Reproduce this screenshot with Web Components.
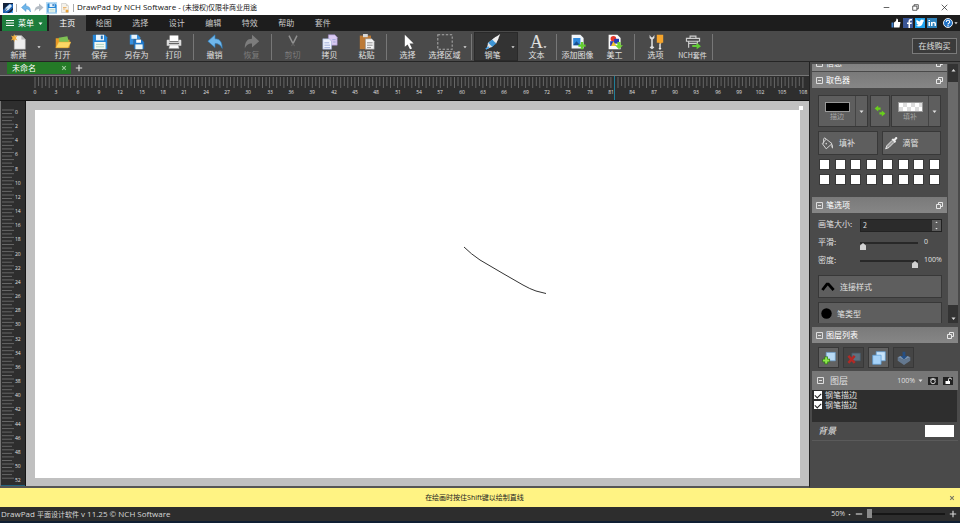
<!DOCTYPE html>
<html lang="zh-CN">
<head>
<meta charset="utf-8">
<title>DrawPad by NCH Software</title>
<style>
html,body{height:100%}
body{margin:0;font:8px/12px "Open Sans","Noto Sans CJK SC",sans-serif;color:#e0e0e0;background:#4a4a4a;--cjk:"Noto Sans CJK SC","Open Sans",sans-serif}
</style>
</head>
<body>
<draw-app></draw-app>
<script>
const ICONS = {
  app:['0 0 20 20','<rect width="20" height="20" fill="#14233c"/><path d="M0 14L12 2h8v8L8 20H0z" fill="#1d62b4"/><path d="M3 17L6 9 14 2l4 4-7 8z" fill="#d9ecfa"/><path d="M3 17l5-6" stroke="#14233c" stroke-width="1.5"/><path d="M12 20q6-1 8-7v7z" fill="#4aa3ec"/>'],
  undo:['0 0 20 20','<path d="M1 9L10 1v5c6 0 9 4 9 12-2-4-4-6-9-6v5z" fill="#6fb6ea" stroke="#2f7fbf" stroke-width=".8"/>'],
  redo:['0 0 20 20','<path d="M19 9L10 1v5C4 6 1 10 1 18c2-4 4-6 9-6v5z" fill="#b4bcc4"/>'],
  redoOff:['0 0 20 20','<path d="M19 9L10 1v5C4 6 1 10 1 18c2-4 4-6 9-6v5z" fill="#7c7c7c"/>'],
  save:['0 0 20 20','<path d="M1 2q0-1 1-1h14l3 3v14q0 1-1 1H2q-1 0-1-1z" fill="#2687d8"/><path d="M5 1h10v7H5z" fill="#eaf5fd"/><path d="M11 2h2.500v4.500H11z" fill="#2472b8"/><path d="M3 10h14v9H3z" fill="#f1f8f2"/><path d="M5 13h10M5 16h10" stroke="#9bcab8"/>'],
  saveAs:['0 0 20 20','<path d="M1 1h10l3 3v9H1z" fill="#3590df"/><path d="M3 1h7v5H3z" fill="#e6f3fc"/><path d="M6 7h10l3 3v9H6z" fill="#1d78cc" stroke="#4a4a4a" stroke-width=".6"/><path d="M9 7h6v4H9z" fill="#fff"/><path d="M8 13h9v6H8z" fill="#eef7f6"/>'],
  doc:['0 0 20 20','<path d="M3 1h9l5 5v13H3z" fill="#f5f2ea" stroke="#aaa" stroke-width=".8"/><path d="M12 1v5h5" fill="#d6d2c8"/><path d="M6 9h7M6 12h5" stroke="#e5a34b" stroke-width="1.500"/><circle cx="14" cy="16" r="3" fill="#eba338"/>'],
  newDoc:['0 0 20 20','<path d="M4 2h9l5 5v12H4z" fill="#ededed" stroke="#999" stroke-width=".6"/><path d="M13 2v5h5z" fill="#bcbcbc"/><path d="M4 0l1 3 3-1-2 3 2 3-3-1-1 3-1-3-3 1 2-3-2-3 3 1z" fill="#f6b13c"/>'],
  open:['0 0 22 20','<path d="M1 5h6l2 2h11v11H1z" fill="#e99a24"/><path d="M5 4l12-2 2 8H6z" fill="#7fc254"/><path d="M1 18L5 10h17l-4 8z" fill="#fbd765" stroke="#e6a52b" stroke-width=".6"/>'],
  print:['0 0 22 20','<path d="M5 1h12v8H5z" fill="#fff"/><path d="M1 8q0-1 1-1h3v3h12V7h3q1 0 1 1v7H1z" fill="#dcdcdc"/><path d="M4 12h14" stroke="#666" stroke-width="1.500"/><path d="M5 14h12l1 5H4z" fill="#fafafa" stroke="#999" stroke-width=".7"/>'],
  cut:['0 0 20 20','<path d="M5 2l5 10 5-10" stroke="#929292" stroke-width="1.800" fill="none"/><path d="M10 12l-2 3M10 12l2 3" stroke="#606060" stroke-width="1.500"/>'],
  copy:['0 0 20 20','<path d="M8 1h8l3 3v10H8z" fill="#d9c9f2" stroke="#9a86c4" stroke-width=".7"/><path d="M1 6h8l3 3v10H1z" fill="#eef1fd" stroke="#93a2d0" stroke-width=".7"/><path d="M3 11h6M3 14h7M3 17h7M13 7h4M14 10h3" stroke="#8f9fd2"/>'],
  paste:['0 0 20 20','<path d="M1 2h14v17H1z" fill="#bd7a35"/><path d="M5 0h6v4H5z" fill="#d7d7d7"/><path d="M8 6h8l3 3v10H8z" fill="#f4f4f4" stroke="#888" stroke-width=".7"/><path d="M10 11h7M10 14h7M10 17h5" stroke="#777"/>'],
  cursor:['0 0 20 20','<path d="M6 1v15l3.500-3 3 6 2.500-1-3-6h5z" fill="#fff"/>'],
  select:['0 0 20 20','<path d="M1 1h18v18H1z" fill="none" stroke="#aaa" stroke-width="1.300" stroke-dasharray="3 2"/>'],
  pen:['0 0 20 20','<path d="M19 0L9 7l5 5z" fill="#f3f3f3"/><path d="M14 3L4 11v5h5l8-10z" fill="#eee"/><path d="M9 7l5 5-6 5-5-5z" fill="#3e95d5"/><path d="M4 11l5 5-7 3z" fill="#e5e5e5"/><path d="M1 19l4-3" stroke="#46a6ef" stroke-width="2"/>'],
  image:['0 0 20 20','<path d="M2 1h11l4 4v13H2z" fill="#f2f6fa"/><path d="M4 5h9v9H4z" fill="#2e8ade"/><path d="M4 14l4-5 5 5z" fill="#174f8f"/><path d="M15 10v9M10.500 14.500h9" stroke="#63cf2d" stroke-width="3"/>'],
  clip:['0 0 20 20','<path d="M2 1h11l4 4v14H2z" fill="#fafafa"/><circle cx="8" cy="6" r="3.500" fill="#e5362b"/><path d="M9 6h6v6H9z" fill="#263bb4"/><path d="M4 9h6v6H4z" fill="#2636b4"/><path d="M8 9l4 6H5z" fill="#f1c332"/><path d="M13 10h4v4h3l-5 5-5-5h3z" fill="#70d334"/>'],
  options:['0 0 20 20','<path d="M2 1v4l2 2v8l-2 2 3 2 3-2-2-2V7l2-2V1L6 4H4z" fill="#ddd"/><path d="M11 1h8v10h-2l-1 2-2-2h-3z" fill="#f5a42b"/><path d="M15 12v5" stroke="#ddd" stroke-width="2"/><circle cx="15" cy="18" r="1.500" fill="#eee"/>'],
  suite:['0 0 22 20','<path d="M7 5V2h8v3M2 5h18v4H2zM5 9v9M17 9v6M5 12h12" fill="none" stroke="#cdcdcd" stroke-width="1.600"/><path d="M10 14h6v-3l6 5-6 4v-3h-6z" fill="#62cc35"/>'],
  like:['0 0 20 20','<path d="M1 9h4v10H1z" fill="#4283ce"/><path d="M6 9l4-3 1-5q3 0 3 3v4h5l-2 11H6z" fill="#fff"/>'],
  fb:['0 0 20 20','<rect width="20" height="20" fill="#3a5696"/><path d="M11 20v-8H8V9h3V6q0-4 4-4h3v3h-2q-2 0-2 2v2h4l-1 3h-3v8z" fill="#fff"/>'],
  tw:['0 0 20 20','<rect width="20" height="20" fill="#20a2ed"/><path d="M2 15q4 0 5-2-3 0-4-3h2Q2 9 2 6l2 1Q2 5 3 3q3 4 7 4 0-4 4-4l2 1 2-1-1 3h1l-2 2q-1 8-8 9-4 0-6-2z" fill="#fff"/>'],
  li:['0 0 20 20','<rect width="20" height="20" fill="#2f83bc"/><path d="M3 8h3v8H3zM3 4h3v2H3zM8 8h3v1q1-1.500 3-1.500 4 0 4 4V16h-3v-4q0-2-2-2t-2 2v4H8z" fill="#fff"/>'],
  help:['0 0 20 20','<circle cx="10" cy="10" r="9" fill="#1c6fc4" stroke="#fff" stroke-width="1.800"/><path d="M6.500 8q0-3.500 3.500-3.500T13.500 8q0 1.500-2 2.500-1.500 1-1.500 2.500" fill="none" stroke="#fff" stroke-width="2.200"/><circle cx="10" cy="15.500" r="1.400" fill="#fff"/>'],
  min:['0 0 10 10','<path d="M1 5h8" stroke="#222"/>'],
  restore:['0 0 10 10','<path d="M1 3h6v6H1zM3 3V1h6v6H7" fill="none" stroke="#222"/>'],
  close:['0 0 10 10','<path d="M1 1l8 8M9 1L1 9" stroke="#222"/>'],
  x:['0 0 10 10','<path d="M2 2l6 6M8 2L2 8" stroke="currentColor" stroke-width="1.800"/>'],
  burger:['0 0 10 10','<path d="M0 2h10M0 5h10M0 8h10" stroke="#fff" stroke-width="1.300"/>'],
  caret:['0 0 10 10','<path d="M1 3h8L5 8z" fill="currentColor"/>'],
  up:['0 0 10 10','<path d="M1 7l4-5 4 5z" fill="currentColor"/>'],
  plus:['0 0 10 10','<path d="M5 1v8M1 5h8" stroke="currentColor" stroke-width="1.400"/>'],
  minus:['0 0 10 10','<path d="M1 5h8" stroke="currentColor" stroke-width="1.400"/>'],
  minusBox:['0 0 7 7','<path d="M.5.5h6v6h-6zM2 3.500h3" fill="none" stroke="#ddd"/>'],
  popout:['0 0 7 7','<path d="M.5 2.500h4v4h-4zM2.500 2.500v-2h4v4h-2" fill="none" stroke="#e8e8e8"/>'],
  swap:['0 0 20 20','<path d="M1 6l6-5v3h4v4H7v3z" fill="#69cf1c"/><path d="M19 14l-6 5v-3H9v-4h4V9z" fill="#69cf1c"/>'],
  bucket:['0 0 20 20','<path d="M8 4l9 7-9 8-6-8zM8 4q-3-4-4 0v7" fill="none" stroke="#d5d5d5" stroke-width="1.500"/><path d="M15 10q5 3 3 9-3-2-2-6" fill="#d5d5d5"/><circle cx="8" cy="11" r="1.200" fill="#d5d5d5"/>'],
  dropper:['0 0 20 20','<path d="M12 3l2 1 2-3q3-1 3 2l-3 3 1 2-2 2-5-5z" fill="#eee"/><path d="M11 6L3 14l-2 5 5-2 8-8" fill="#9d9d9d" stroke="#eee" stroke-width="1.400"/>'],
  join:['0 0 20 14','<path d="M2 12L8.500 3.500h2L18 12" fill="none" stroke="#000" stroke-width="4"/>'],
  dot:['0 0 20 20','<circle cx="10" cy="10" r="9.500" fill="#000"/>'],
  addLayer:['0 0 20 20','<path d="M6 2h13v12H6z" fill="#b9daf5" stroke="#6b9dcc"/><path d="M6 8v11M.500 13.500h11" stroke="#2f7d16" stroke-width="5"/><path d="M6 9v9M1.500 13.500h9" stroke="#8fe84b" stroke-width="3"/>'],
  delLayer:['0 0 20 20','<path d="M7 3h12v11H7z" fill="#5d7181" stroke="#485a69"/><path d="M2 7l9 10M11 7L2 17" stroke="#b12a26" stroke-width="3.500"/>'],
  dupLayer:['0 0 20 20','<path d="M6 1h13v13H6z" fill="#c8e3fa" stroke="#5d9cd4"/><path d="M1 6h12v13H1z" fill="#a6d2f8" stroke="#5d9cd4"/>'],
  mergeLayer:['0 0 20 20','<path d="M1 9l9 4 9-4v5l-9 6-9-6z" fill="#64788f"/><path d="M1 9l9 4 9-4-4-2H5z" fill="#7b93af"/><path d="M8 1h4v6h3l-5 5-5-5h3z" fill="#264f83"/>'],
  eye:['0 0 20 16','<rect width="20" height="16" fill="#222"/><circle cx="10" cy="9" r="4.500" fill="none" stroke="#e8e8e8" stroke-width="1.800"/><path d="M4 5q6-5 12 0" stroke="#e8e8e8" fill="none" stroke-width="1.500"/>'],
  lock:['0 0 20 16','<rect width="20" height="16" fill="#222"/><path d="M5 8h9v6H5z" fill="#fff"/><path d="M11 8V5q0-3 3-3t3 3" fill="none" stroke="#fff" stroke-width="1.800"/>']
};

const BASE = `<style>*{box-sizing:border-box}button,input,select{font:inherit;color:inherit}button{margin:0;padding:0;border:0;background:none;display:flex;align-items:center;justify-content:center}
input{margin:0;accent-color:#fff}</style>`;

/* Registers an element whose shadow root is cloned from the given markup. */
function define(name, markup, setup){
  const t = document.createElement('template');
  t.innerHTML = BASE + markup;
  customElements.define(name, class extends HTMLElement{
    connectedCallback(){
      if(this.shadowRoot) return;
      const r = this.attachShadow({mode:'open'});
      r.append(t.content.cloneNode(true));
      setup?.(r, this);
    }
  });
}

define('ui-icon','<style>:host{display:block;flex:none;width:10px;height:10px}svg{display:block;width:100%;height:100%}</style><svg></svg>',(r,h)=>{
  const [box,body]=ICONS[h.getAttribute('name')], s=r.querySelector('svg');
  s.setAttribute('viewBox',box); s.setAttribute('aria-hidden','true'); s.innerHTML=body;
});

define('title-bar',`<style>
:host{display:flex;align-items:center;height:15px;background:#fff;color:#111;padding-left:3px}
.quick{display:flex;gap:2px;align-items:center}
.quick button{width:11px;height:12px}
.quick .on{background:#b9dcf3}
.quick ui-icon{width:10px}
i{width:1px;height:8px;background:#aaa;margin:0 1px}
h1{font:inherit;margin:0 0 0 2px;flex:1;white-space:nowrap}
h1 span{font-size:7px}
.win button{width:29px;height:15px}.win{display:flex;padding-right:1px}.win ui-icon{width:7px;height:7px}
</style>
<div class="quick"><ui-icon name="app"></ui-icon><i></i><button aria-label="撤销"><ui-icon name="undo"></ui-icon></button><button aria-label="恢复"><ui-icon name="redo"></ui-icon></button><button class="on" aria-label="保存"><ui-icon name="save"></ui-icon></button><button aria-label="文档"><ui-icon name="doc"></ui-icon></button><i></i></div>
<h1>DrawPad by NCH Software - <span>(未授权)仅限非商业用途</span></h1>
<div class="win"><button aria-label="最小化"><ui-icon name="min"></ui-icon></button><button aria-label="还原"><ui-icon name="restore"></ui-icon></button><button aria-label="关闭"><ui-icon name="close"></ui-icon></button></div>`);

define('menu-bar',`<style>
:host{display:flex;align-items:stretch;height:16px;background:#1d1d1d;font-family:var(--cjk);padding:0 2px}
.menu{width:45px;background:#1d7c3c;gap:4px;color:#fff}.menu ui-icon{width:8px;height:8px}.menu ui-icon:last-child{width:5px;height:5px}
nav{display:grid;grid-template-columns:repeat(8,1fr);width:292px;margin-left:2px}
nav button{color:#c9c9c9}nav .on{background:#4a4a4a;color:#fff;box-shadow:inset 0 1px #686868}
.links{margin-left:auto;display:flex;align-items:center;gap:2px}.links a{display:block;color:#fff}.links a:last-of-type{margin-left:4px}.links .c{width:4px;height:4px;margin-left:-1px}
</style>
<button class="menu"><ui-icon name="burger"></ui-icon>菜单<ui-icon name="caret"></ui-icon></button>
<nav><button class="on">主页</button><button>绘图</button><button>选择</button><button>设计</button><button>编辑</button><button>特效</button><button>帮助</button><button>套件</button></nav>
<div class="links"><a href="#" aria-label="Like"><ui-icon name="like"></ui-icon></a><a href="#" aria-label="Facebook"><ui-icon name="fb"></ui-icon></a><a href="#" aria-label="Twitter"><ui-icon name="tw"></ui-icon></a><a href="#" aria-label="LinkedIn"><ui-icon name="li"></ui-icon></a><a href="#" aria-label="Help"><ui-icon name="help"></ui-icon></a><ui-icon class="c" name="caret"></ui-icon></div>`);

define('tool-button',`<style>
:host{display:flex;width:37px;position:relative}
:host([split]){width:44px}:host([split]) button{padding-right:7px}
:host([active]) button{background:#333;border:1px solid #2a2a2a}
:host([off]){color:#7d7d7d}
:host([small]) button{font-size:7px}
button{flex:1;flex-direction:column;white-space:nowrap;border:1px solid transparent;line-height:10px}
ui-icon{width:16px;height:16px}
b{font:18px/16px "Liberation Serif",serif;height:16px}
.c{position:absolute;right:3px;top:13px;width:4px;height:4px}
:host([menu]) .c{right:8px}
</style><button><slot></slot></button>`,(r,h)=>{
  const b=r.querySelector('button'), n=h.getAttribute('icon');
  b.insertAdjacentHTML('afterbegin', n==='A'?'<b>A</b>':`<ui-icon name="${n}"></ui-icon>`);
  if(h.hasAttribute('split')||h.hasAttribute('menu')) b.insertAdjacentHTML('beforeend','<ui-icon class="c" name="caret"></ui-icon>');
});

define('tool-bar',`<style>
:host{display:flex;height:31px;background:#4a4a4a;border-bottom:1px solid #252525;font-family:var(--cjk);color:#e0e0e0;padding:1px 0 0}
i{width:1px;height:26px;background:#777;margin:2px 2px 0 1px}
.buy{margin:6px 3px 7px auto;width:45px;border:1px solid #7a7a7a;background:#3b3b3b}
</style>
<tool-button icon="newDoc" split>新建</tool-button><tool-button icon="open">打开</tool-button><tool-button icon="save">保存</tool-button><tool-button icon="saveAs">另存为</tool-button><tool-button icon="print">打印</tool-button><i></i>
<tool-button icon="undo">撤销</tool-button><tool-button icon="redoOff" off>恢复</tool-button><i></i>
<tool-button icon="cut" off>剪切</tool-button><tool-button icon="copy">拷贝</tool-button><tool-button icon="paste">粘贴</tool-button><i></i>
<tool-button icon="cursor">选择</tool-button><tool-button icon="select" split>选择区域</tool-button><i></i>
<tool-button icon="pen" split active>钢笔</tool-button><tool-button icon="A" menu>文本</tool-button><i></i>
<tool-button icon="image">添加图像</tool-button><tool-button icon="clip">美工</tool-button><i></i>
<tool-button icon="options">选项</tool-button><tool-button icon="suite" small>NCH套件</tool-button><i></i>
<button class="buy">在线购买</button>`);

define('doc-tabs',`<style>
:host{display:flex;align-items:flex-start;height:14px;background:#4a4a4a;border-bottom:1px solid #777;padding-left:7px;font-family:var(--cjk);gap:4px}
.tab{display:flex;align-items:center;justify-content:space-between;width:64px;height:12px;background:#247a27;padding:0 4px 0 5px;color:#fff}
.tab button{color:#9ccc9c}.tab ui-icon{width:6px;height:6px}.add{height:12px}.add ui-icon{width:8px;height:8px}
</style>
<div class="tab"><span>未命名</span><button aria-label="关闭"><ui-icon name="x"></ui-icon></button></div><button class="add" aria-label="添加"><ui-icon name="plus"></ui-icon></button>`);

/* Ruler scale: labels every two or three units, with a tick every half unit. */
define('scale-ruler',`<style>:host{display:block;overflow:hidden;background:#2e2e2e;min-width:0;min-height:0;position:relative}svg{position:absolute;width:100%;height:100%}text{font:5px "Open Sans",sans-serif;fill:#e0e0e0}</style><svg></svg>`,(r,h)=>{
  const v=h.hasAttribute('vertical'), u=v?7.08:7.11, start=v?9:35, n=v?105:217, step=v?2:3, last=v?52:108;
  let s='';
  for(let i=0;i<n;i++){
    const p=(start+i*u/2).toFixed(1), l=i%2?10:12;
    s+= v?`<path d="M1 ${p}H${l+1}" stroke="#666"/>`:`<path d="M${p} 1V${l}" stroke="#666"/>`;
  }
  for(let i=0;i<=last;i+=step){
    const p=Math.round(start+i*u);
    s+= v?`<text x="14" y="${p+4}">${i}</text>`:`<text x="${p}" y="18" text-anchor="middle">${i}</text>`;
  }
  s+= v?'<path d="M0 384.500H25" stroke="#22637d"/>':'<path d="M614.500 0V24" stroke="#217f99"/>';
  r.querySelector('svg').innerHTML=s;
});

define('draw-canvas',`<style>
:host{display:block;background:#c0c0c0;padding:9px 9px 8px 9px;position:relative}
.paper{background:#fff;height:100%}svg{display:block;width:100%;height:100%}
i{position:absolute;right:6px;top:5px;width:4px;height:4px;background:#fff}
</style><div class="paper"><svg><path d="M429 137Q436 144 445 150L468 163.500L488 175Q495 179 501 181L511 183.500" fill="none" stroke="#333"/></svg></div><i></i>`);

define('work-area',`<style>
:host{display:grid;grid-template:14px 25px 1fr/26px 1fr;border-right:1px solid #222;border-bottom:2px solid #555;min-width:0}
doc-tabs,.h{grid-column:1/-1}.h{border-bottom:1px solid #151515}.v{border-left:1px solid #777;border-right:1px solid #151515}
</style><doc-tabs></doc-tabs><scale-ruler class="h"></scale-ruler><scale-ruler class="v" vertical></scale-ruler><draw-canvas></draw-canvas>`);

define('panel-header',`<style>
:host{display:flex;align-items:center;height:16px;padding:0 4px;gap:3px;background:linear-gradient(#7a7a7a,#868686);color:#fff;font-family:var(--cjk)}
ui-icon{width:7px;height:7px}span{flex:1}
</style><ui-icon name="minusBox"></ui-icon><span><slot></slot></span><ui-icon name="popout"></ui-icon>`);

define('color-panel',`<style>
:host{display:grid;gap:4px;padding:6px 6px 12px;font-family:var(--cjk)}
button{background:#5e5e5e;border:1px solid #383838}
.pick{display:grid;grid-template-columns:50px 20px 50px;gap:1px;justify-content:space-between;height:32px}
.pick button.s{display:grid;grid-template-columns:1fr 11px;align-items:stretch}
.s>span{display:flex;flex-direction:column;align-items:center;justify-content:center;line-height:9px;font-size:7px;color:#a5a5a5}
.s>ui-icon{width:5px;height:5px;place-self:center}.s>span{border-right:1px solid #444}
em{width:25px;height:10px;border:1px solid #999;background:#000}
.chk{background:repeating-conic-gradient(#ddd 0 25%,#fff 0 50%) 0 0/8px 8px}
.swap ui-icon{width:12px;height:12px}
.two{display:grid;grid-template-columns:1fr 1fr;gap:4px}
.two button{height:24px;justify-content:flex-start;padding-left:2px;gap:5px}.two ui-icon{width:13px;height:14px}
.sw{display:grid;grid-template-columns:repeat(8,11px);justify-content:space-between;padding:0 1px;gap:4px 0}
.sw button{width:11px;height:11px;background:#fff}
</style>
<div class="pick"><button class="s"><span><em></em>描边</span><ui-icon name="caret"></ui-icon></button><button class="swap" aria-label="交换"><ui-icon name="swap"></ui-icon></button><button class="s"><span><em class="chk"></em>填补</span><ui-icon name="caret"></ui-icon></button></div>
<div class="two"><button><ui-icon name="bucket"></ui-icon>填补</button><button><ui-icon name="dropper"></ui-icon>滴管</button></div>
<div class="sw"></div>`,r=>{r.querySelector('.sw').innerHTML='<button aria-label="白色"></button>'.repeat(16)});

define('pen-panel',`<style>
:host{display:grid;gap:4px;padding:4px 6px 5px;font-family:var(--cjk)}
.row{display:grid;grid-template-columns:42px 56px 1fr;align-items:start;height:14px}
.row.end{margin-bottom:3px}
.row label{line-height:12px}
.num{grid-column:2/4;display:flex;height:13px;background:#2b2b2b;border:1px solid #222;margin-top:1px}
.num input{flex:1;min-width:0;border:0;background:none;padding:0 2px;font-size:7px;line-height:11px}
.sp{display:grid;width:9px;background:#5c5c5c}.sp button{height:5px}.sp ui-icon{width:3px;height:3px}
input[type=range]{appearance:none;background:none;width:58px;height:14px}
input[type=range]::-webkit-slider-runnable-track{height:2px;background:#282828}
input[type=range]::-webkit-slider-thumb{appearance:none;width:6px;height:7px;margin-top:1px;background:#d2d2d2;clip-path:polygon(50% 0,100% 35%,100% 100%,0 100%,0 35%)}
output{font:7px/12px "Open Sans",sans-serif;padding-left:8px;white-space:nowrap}
.big{height:23px;background:#5e5e5e;border:1px solid #383838;justify-content:flex-start;padding-left:2px;gap:5px}
.big ui-icon{width:14px;height:11px}
.big ui-icon[name=dot]{width:11px}
</style>
<div class="row"><label for="a">画笔大小:</label><div class="num"><input id="a" value="2"><span class="sp"><button aria-label="增加"><ui-icon name="up"></ui-icon></button><button aria-label="减少"><ui-icon name="caret"></ui-icon></button></span></div></div>
<div class="row"><label for="b">平滑:</label><input id="b" type="range" value="0"><output>0</output></div>
<div class="row end"><label for="c">密度:</label><input id="c" type="range" value="100"><output>100%</output></div>
<button class="big"><ui-icon name="join"></ui-icon>连接样式</button><button class="big"><ui-icon name="dot"></ui-icon>笔类型</button>`);

define('scroll-strip',`<style>:host{display:flex;flex-direction:column;width:10px;background:#333}
button{height:18px;color:#ddd;padding-bottom:6px}button:last-child{padding:8px 0 0}ui-icon{width:5px;height:5px}i{flex:1;background:#6a6a6a}</style>
<button aria-label="向上"><ui-icon name="up"></ui-icon></button><i></i><button aria-label="向下"><ui-icon name="caret"></ui-icon></button>`);

define('layer-panel',`<style>
:host{display:block;font-family:var(--cjk)}
.acts{display:flex;gap:4px;padding:4px 6px 3px}
.acts button{width:21px;height:21px;background:#626262;border:1px solid #383838}.acts .off{background:#454545}.acts ui-icon{width:14px;height:14px}
.hd{display:flex;align-items:center;height:19px;background:#777;padding:0 5px;gap:5px}
.hd>ui-icon{width:7px;height:7px}.hd h2{font:9px/12px var(--cjk);margin:0 auto 0 1px}
.pct{font:7px/12px "Open Sans",sans-serif;gap:3px}.pct ui-icon{width:5px;height:5px}.hd .i ui-icon{height:8px}
.list{background:#2e2e2e;height:32px;margin-right:1px;padding:0 2px}
label{display:flex;gap:3px;height:10px;line-height:10px;align-items:center}
input{appearance:none;width:8px;height:8px;background:#fff;display:grid;place-items:center}
input:checked::after{content:"";width:5px;height:3px;border:solid #222;border-width:0 0 1px 1px;transform:rotate(-45deg)}
.bg{display:flex;justify-content:space-between;align-items:center;height:19px;padding:0 4px 0 6px;border-bottom:1px solid #5a5a5a;font-size:9px;font-style:italic}
.bg button{width:29px;height:12px;background:#fff}
</style>
<panel-header>图层列表</panel-header>
<div class="acts"><button aria-label="添加"><ui-icon name="addLayer"></ui-icon></button><button class="off" aria-label="删除"><ui-icon name="delLayer"></ui-icon></button><button aria-label="复制"><ui-icon name="dupLayer"></ui-icon></button><button class="off" aria-label="合并"><ui-icon name="mergeLayer"></ui-icon></button></div>
<div class="hd"><ui-icon name="minusBox"></ui-icon><h2>图层</h2><button class="pct">100%<ui-icon name="caret"></ui-icon></button><button class="i" aria-label="可见"><ui-icon name="eye"></ui-icon></button><button class="i" aria-label="锁定"><ui-icon name="lock"></ui-icon></button></div>
<div class="list"><label><input type="checkbox" checked>钢笔描边</label><label><input type="checkbox" checked>钢笔描边</label></div>
<div class="bg"><span>背景</span><button aria-label="背景颜色"></button></div>`);

define('side-bar',`<style>
:host{display:flex;flex-direction:column;gap:4px;padding:2px 2px 0;background:#4a4a4a;min-width:0}
.top{display:flex;gap:1px;height:259px}.scroll{flex:1;overflow:hidden;min-width:0}
.scroll>panel-header{margin-bottom:1px}
</style>
<div class="top"><div class="scroll"><panel-header>信息</panel-header><panel-header>取色器</panel-header><color-panel></color-panel><panel-header>笔选项</panel-header><pen-panel></pen-panel></div><scroll-strip></scroll-strip></div>
<layer-panel></layer-panel>`,r=>requestAnimationFrame(()=>{r.querySelector('.scroll').scrollTop=9}));

define('hint-bar',`<style>:host{display:flex;align-items:center;height:19px;background:#fff383;color:#222;font-size:7px;padding:0 5px 0 0}
span{flex:1;text-align:center}ui-icon{width:6px;height:6px;color:#776}</style><span>在绘画时按住Shift键以绘制直线</span><button aria-label="关闭"><ui-icon name="x"></ui-icon></button>`);

define('status-bar',`<style>
:host{display:flex;align-items:center;height:16px;background:#2d2d2d;border-bottom:2px solid #101e33;padding:0 3px 0 1px;color:#d8d8d8}
p{flex:1;margin:0}p span{font-size:7px}.z{font:7px/12px "Open Sans",sans-serif;gap:3px;margin-right:4px}.z ui-icon{width:3px;height:3px}ui-icon{width:8px;height:8px}
input{appearance:none;background:none;width:78px;height:12px;margin:0 4px}
input::-webkit-slider-runnable-track{height:2px;background:#161616}
input::-webkit-slider-thumb{appearance:none;width:5px;height:9px;margin-top:-4px;background:#8b8b8b}
</style><p>DrawPad <span>平面设计软件</span> v 11.25 © NCH Software</p><button class="z">50%<ui-icon name="caret"></ui-icon></button><button aria-label="缩小"><ui-icon name="minus"></ui-icon></button><input type="range" value="0" aria-label="缩放"><button aria-label="放大"><ui-icon name="plus"></ui-icon></button>`);

define('draw-app',`<style>:host{display:flex;flex-direction:column;height:100vh;overflow:hidden}
main{flex:1;display:grid;grid-template-columns:1fr 150px;min-height:0}</style>
<title-bar></title-bar><menu-bar></menu-bar><tool-bar></tool-bar><main><work-area></work-area><side-bar></side-bar></main><hint-bar></hint-bar><status-bar></status-bar>`);
</script>
</body>
</html>
